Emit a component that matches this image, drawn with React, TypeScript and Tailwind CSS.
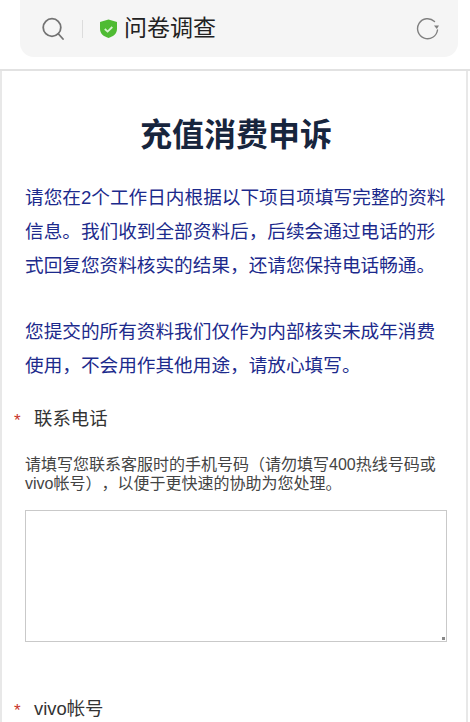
import React from "react";

function Star() {
  return <span className="w-[20px] text-[#c8332b] text-[17px] leading-none pt-[6px]">*</span>;
}

export default function App() {
  return (
    <div className="w-[470px] h-[722px] overflow-hidden bg-white font-['Liberation_Sans','Noto_Sans_CJK_SC',sans-serif] [text-spacing-trim:space-all]">
      <div className="h-[71px] border-b-2 border-[#e2e2e2] pl-[20px] pr-[12px]">
        <div className="h-[57px] rounded-b-[14px] bg-[#f5f5f5] flex items-center pl-[22px] pr-[18px]">
          <svg width="22" height="24" viewBox="0 0 22 24" fill="none" stroke="#737373" strokeWidth="1.8">
            <circle cx="10" cy="10.500" r="8.800" />
            <path d="M16.500 17l4.500 5" strokeLinecap="round" />
          </svg>
          <div className="w-px h-[18px] bg-[#dcdcdc] ml-[18px] mr-[16px]" />
          <svg width="19" height="21" viewBox="0 0 19 21">
            <path d="M9.500 1.500L18 4v7c0 4.500-3.600 7.500-8.500 9C4.600 18.500 1 15.500 1 11V4z" fill="#4fbb33" />
            <path d="M5.800 11l2.800 2.600 4.700-4.600" fill="none" stroke="#d8f3d0" strokeWidth="1.800" />
          </svg>
          <span className="ml-[6px] text-[23px] leading-none text-[#222]">问卷调查</span>
          <svg className="ml-auto" width="24" height="24" viewBox="0 0 24 24" fill="none" stroke="#808080" strokeWidth="1.400">
            <path d="M21.500 13a10 10 0 1 1-3-8.500" strokeLinecap="round" />
            <path d="M23 8.500h-5l2.800 3.500z" fill="#808080" stroke="none" />
          </svg>
        </div>
      </div>
      <main className="flex flex-col h-[651px] w-[468px] border-l-2 border-r-2 border-[#e8e8e8] pr-[19px] pl-[23px]">
        <h1 className="mt-[44px] h-[40px] text-center text-[#17253d] text-[32px] leading-[40px] font-bold">充值消费申诉</h1>
        <div className="mt-[26px] text-[#1c2a8c] text-[18.650px] leading-[34px]">
          <p>请您在2个工作日内根据以下项目项填写完整的资料信息。我们收到全部资料后，后续会通过电话的形式回复您资料核实的结果，还请您保持电话畅通。</p>
          <p className="mt-[32px]">您提交的所有资料我们仅作为内部核实未成年消费使用，不会用作其他用途，请放心填写。</p>
        </div>
        <div className="mt-[23px] flex -ml-[11px] text-[18.400px] leading-[26px] text-[#333]"><Star /><span>联系电话</span></div>
        <p className="mt-[23px] text-[16px] leading-[19px] text-[#444]">请填写您联系客服时的手机号码（请勿填写400热线号码或vivo帐号），以便于更快速的协助为您处理。</p>
        <div className="relative mt-[17px] h-[132px] w-[422px] border border-[#c9c9c9]">
          <div className="absolute right-[1px] bottom-[1px] w-[3px] h-[3px] bg-[#888]" />
        </div>
        <div className="mt-[54px] flex -ml-[11px] text-[18.400px] leading-[26px] text-[#333]"><Star /><span>vivo帐号</span></div>
      </main>
    </div>
  );
}
